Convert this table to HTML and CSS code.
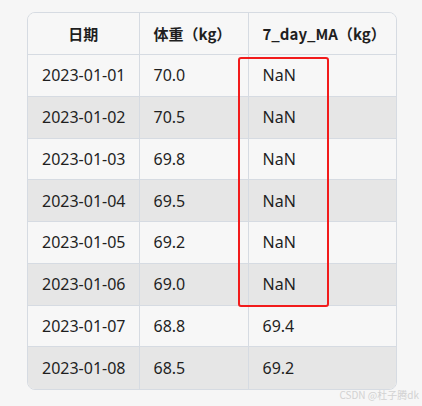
FILE: index.html
```html
<!DOCTYPE html>
<html lang="zh">
<head>
<meta charset="utf-8">
<link rel="stylesheet" href="styles.css">
</head>
<body>
<div class="wrap">
  <table class="data">
    <colgroup><col class="c1"><col class="c2"><col class="c3"></colgroup>
    <thead>
      <tr><th class="center">日期</th><th>体重（kg）</th><th>7_day_MA（kg）</th></tr>
    </thead>
    <tbody>
      <tr><td>2023-01-01</td><td>70.0</td><td>NaN</td></tr>
      <tr><td>2023-01-02</td><td>70.5</td><td>NaN</td></tr>
      <tr><td>2023-01-03</td><td>69.8</td><td>NaN</td></tr>
      <tr><td>2023-01-04</td><td>69.5</td><td>NaN</td></tr>
      <tr><td>2023-01-05</td><td>69.2</td><td>NaN</td></tr>
      <tr><td>2023-01-06</td><td>69.0</td><td>NaN</td></tr>
      <tr><td>2023-01-07</td><td>68.8</td><td>69.4</td></tr>
      <tr><td>2023-01-08</td><td>68.5</td><td>69.2</td></tr>
    </tbody>
  </table>
  <div class="highlight"></div>
</div>
<div class="watermark">CSDN @杜子腾dk</div>
</body>
</html>
```
FILE: styles.css
```css
html, body {
  margin: 0;
  padding: 0;
  background: #f6f6f6;
}
body {
  width: 422px;
  height: 406px;
  position: relative;
  overflow: hidden;
  font-family: "Noto Sans", "Noto Sans CJK SC", sans-serif;
  color: #1f1f1f;
}
.wrap {
  position: relative;
  margin: 12px 0 0 27px;
  width: 370px;
  box-sizing: border-box;
  border: 1px solid #d6dbe2;
  border-radius: 8px;
  overflow: hidden;
}
.data {
  width: 100%;
  border-collapse: collapse;
  table-layout: fixed;
  font-size: 16px;
}
.c1 { width: 111px; }
.c2 { width: 109px; }
th, td {
  padding: 0 14px;
  text-align: left;
  white-space: nowrap;
  border-left: 1px solid #d6dbe2;
  border-top: 1px solid #d6dbe2;
}
th:first-child, td:first-child { border-left: none; }
thead th {
  border-top: none;
  height: 41px;
  font-size: 15px;
  font-weight: 700;
  background: #f7f7f7;
  font-family: "Noto Sans CJK SC", "Noto Sans", sans-serif;
}
th.center { text-align: center; }
tbody tr { height: 41.75px; }
tbody tr:nth-child(odd) { background: #f7f7f7; }
tbody tr:nth-child(even) { background: #e6e6e6; }
.highlight {
  position: absolute;
  left: 210px;
  top: 44px;
  width: 91px;
  height: 250px;
  box-sizing: border-box;
  border: 2px solid #f21b1b;
  border-radius: 3px;
}
.watermark {
  position: absolute;
  right: 3px;
  bottom: 4px;
  font-size: 10px;
  color: #d2d2d2;
  font-family: "Noto Sans CJK SC", sans-serif;
}
```
